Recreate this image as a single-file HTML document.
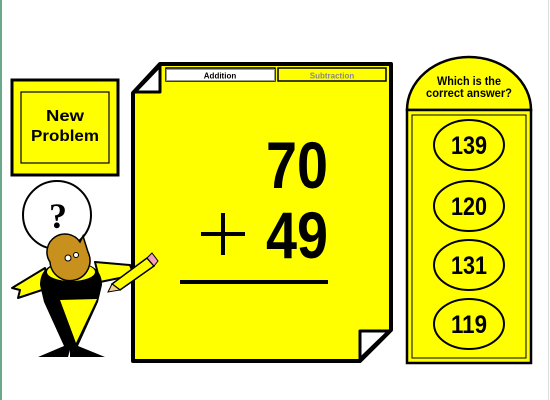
<!DOCTYPE html>
<html><head><style>
html,body{margin:0;padding:0;}
body{width:550px;height:400px;background:#fff;position:relative;overflow:hidden;font-family:"Liberation Sans",sans-serif;}
.abs{position:absolute;}
</style></head><body>
<div class="abs" style="left:0;top:0;width:2px;height:400px;background:#6aa88a"></div>
<div class="abs" style="left:548px;top:0;width:1px;height:400px;background:#ddd"></div>

<svg class="abs" style="left:0;top:0" width="550" height="400">
  <rect x="12" y="80" width="106" height="95" fill="#ffff00" stroke="#000" stroke-width="3"/>
  <rect x="21" y="92" width="88" height="71" fill="none" stroke="#000" stroke-width="1.2"/>
  <text x="65" y="121" font-family="Liberation Sans" font-weight="bold" font-size="16" text-anchor="middle" textLength="38" lengthAdjust="spacingAndGlyphs">New</text>
  <text x="65" y="141" font-family="Liberation Sans" font-weight="bold" font-size="16" text-anchor="middle" textLength="68" lengthAdjust="spacingAndGlyphs">Problem</text>

  <polygon points="160,64 391,64 391,330 360,361 133,361 133,93" fill="#ffff00" stroke="#000" stroke-width="4" stroke-linejoin="round"/>
  <polygon points="160,66 160,92 135,92" fill="#fff" stroke="#000" stroke-width="3" stroke-linejoin="round"/>
  <polygon points="360,359 360,331 389,331" fill="#fff" stroke="#000" stroke-width="3" stroke-linejoin="round"/>
  <rect x="166" y="68" width="109" height="13" fill="#fff" stroke="#000" stroke-width="1.5"/>
  <rect x="166.5" y="69.5" width="108" height="11" fill="none" stroke="#999" stroke-width="1"/>
  <text x="220" y="78.5" font-family="Liberation Sans" font-weight="bold" font-size="8" text-anchor="middle">Addition</text>
  <rect x="278" y="68" width="108" height="13" fill="#ffff00" stroke="#000" stroke-width="1.5"/>
  <text x="332" y="78.5" font-family="Liberation Sans" font-weight="bold" font-size="8" text-anchor="middle" fill="#888">Subtraction</text>
  <text x="328" y="188" font-family="Liberation Sans" font-weight="bold" font-size="66" text-anchor="end" textLength="62" lengthAdjust="spacingAndGlyphs">70</text>
  <text x="328" y="258" font-family="Liberation Sans" font-weight="bold" font-size="66" text-anchor="end" textLength="62" lengthAdjust="spacingAndGlyphs">49</text>
  <rect x="201" y="232" width="44" height="4" fill="#000"/>
  <rect x="221" y="213" width="4" height="42" fill="#000"/>
  <rect x="180" y="280" width="148" height="4" fill="#000"/>

  <path d="M407,110 A62,53 0 0 1 531,110 Z" fill="#ffff00" stroke="#000" stroke-width="2.5"/>
  <rect x="407" y="110" width="124" height="253" fill="#ffff00" stroke="#000" stroke-width="2.5"/>
  <rect x="412" y="115" width="114" height="243" fill="none" stroke="#000" stroke-width="1"/>
  <text x="469" y="85" font-family="Liberation Sans" font-weight="bold" font-size="11.5" text-anchor="middle" textLength="64" lengthAdjust="spacingAndGlyphs">Which is the</text>
  <text x="469" y="97" font-family="Liberation Sans" font-weight="bold" font-size="11.5" text-anchor="middle" textLength="86" lengthAdjust="spacingAndGlyphs">correct answer?</text>
  <g font-family="Liberation Sans" font-weight="bold" font-size="25" text-anchor="middle">
    <ellipse cx="469" cy="145" rx="35" ry="25" fill="none" stroke="#000" stroke-width="2"/>
    <text x="469" y="154" textLength="36" lengthAdjust="spacingAndGlyphs">139</text>
    <ellipse cx="469" cy="206" rx="35" ry="25" fill="none" stroke="#000" stroke-width="2"/>
    <text x="469" y="215" textLength="36" lengthAdjust="spacingAndGlyphs">120</text>
    <ellipse cx="469" cy="265" rx="35" ry="25" fill="none" stroke="#000" stroke-width="2"/>
    <text x="469" y="274" textLength="36" lengthAdjust="spacingAndGlyphs">131</text>
    <ellipse cx="469" cy="324" rx="35" ry="25" fill="none" stroke="#000" stroke-width="2"/>
    <text x="469" y="333" textLength="36" lengthAdjust="spacingAndGlyphs">119</text>
  </g>

  <!-- bee -->
  <circle cx="57" cy="215" r="34" fill="#fff" stroke="#000" stroke-width="2"/>
  <text x="58" y="228" font-family="Liberation Serif" font-weight="bold" font-size="36" text-anchor="middle">?</text>
  <polygon points="45,268 12,288 20,290 18,298 48,288" fill="#ffff00" stroke="#000" stroke-width="2" stroke-linejoin="round"/>
  <polygon points="95,262 130,265 134,275 100,282" fill="#ffff00" stroke="#000" stroke-width="2" stroke-linejoin="round"/>
  <path d="M40,285 Q40,262 70,262 Q102,262 102,285 L98,302 L78,346 L105,357 L70,357 L70,350 L68,357 L38,357 L64,346 L44,302 Z" fill="#000"/>
  <ellipse cx="71" cy="272" rx="24" ry="9" fill="#ffff00"/>
  <polygon points="60,300 97,299 76,343" fill="#ffff00"/>
  <path d="M50,262 A18,18 0 0 1 80,242 L83,236 L88,252 A20,20 0 1 1 50,262 Z" fill="#c8901c" stroke="#000" stroke-width="1.5"/>
  <circle cx="68" cy="258" r="3" fill="#fff" stroke="#000"/>
  <circle cx="76" cy="255" r="2.5" fill="#fff" stroke="#000"/>
  <polygon points="112,284 147,258 154,266 120,290" fill="#ffff00" stroke="#000" stroke-width="1.5"/>
  <polygon points="147,258 152,253 158,261 154,266" fill="#f4a0b8" stroke="#000" stroke-width="1"/>
  <polygon points="112,284 120,290 108,292" fill="#f0d090" stroke="#000" stroke-width="1"/>
</svg>
</body></html>
